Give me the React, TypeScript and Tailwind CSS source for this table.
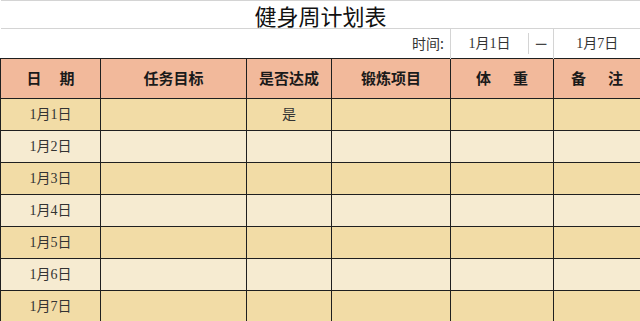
const days = ['1月1日', '1月2日', '1月3日', '1月4日', '1月5日', '1月6日', '1月7日'];

const cell = 'border border-[#1f1f1f] p-0 text-center';

const App = () => {
  return (
    <div className="w-[640px] h-[321px] overflow-hidden bg-white font-['Liberation_Serif','Noto_Sans_CJK_SC',serif] text-[#222]">
      <table className="w-[640px] table-fixed border-collapse">
        <colgroup>
          <col className="w-[100px]" />
          <col className="w-[146px]" />
          <col className="w-[85px]" />
          <col className="w-[119px]" />
          <col className="w-[103px]" />
          <col className="w-[87px]" />
        </colgroup>
        <tbody>
          <tr className="h-[28px]">
            <td colSpan={6} className="border-t border-b border-[#d4d4d4] p-0 text-center text-[22px] leading-none font-['Noto_Sans_CJK_SC',sans-serif] text-[#111]">
              健身周计划表
            </td>
          </tr>
          <tr className="h-[30px] text-[14px] text-[#333]">
            <td colSpan={4} className="p-0 pr-[6px] text-right font-['Noto_Sans_CJK_SC',sans-serif]">时间:</td>
            <td className="border-l border-[#d4d4d4] p-0">
              <div className="flex">
                <div className="w-[78px] text-center">1月1日</div>
                <div className="w-[25px] border-l border-[#d4d4d4] text-center text-[13px] font-bold text-[#444] font-['Noto_Sans_CJK_SC',sans-serif]">—</div>
              </div>
            </td>
            <td className="border-l border-[#d4d4d4] p-0 text-center">1月7日</td>
          </tr>
          <tr className="h-[40px] bg-[#f2b99b] text-[15px] font-bold font-['Noto_Sans_CJK_SC',sans-serif] text-[#1a1a1a]">
            <td className={cell}><span className="mr-[18px]">日</span>期</td>
            <td className={cell}>任务目标</td>
            <td className={cell}>是否达成</td>
            <td className={cell}>锻炼项目</td>
            <td className={cell}><span className="mr-[22px]">体</span>重</td>
            <td className={cell}><span className="mr-[22px]">备</span>注</td>
          </tr>
          {days.map((d, i) => (
            <tr key={d} className={`h-[32px] text-[14px] text-[#333] ${i % 2 === 0 ? 'bg-[#f2dca6]' : 'bg-[#f6ebd1]'}`}>
              <td className={cell}>{d}</td>
              <td className={cell}></td>
              <td className={cell}>{i === 0 ? '是' : ''}</td>
              <td className={cell}></td>
              <td className={cell}></td>
              <td className={cell}></td>
            </tr>
          ))}
        </tbody>
      </table>
    </div>
  );
};

export default App;
